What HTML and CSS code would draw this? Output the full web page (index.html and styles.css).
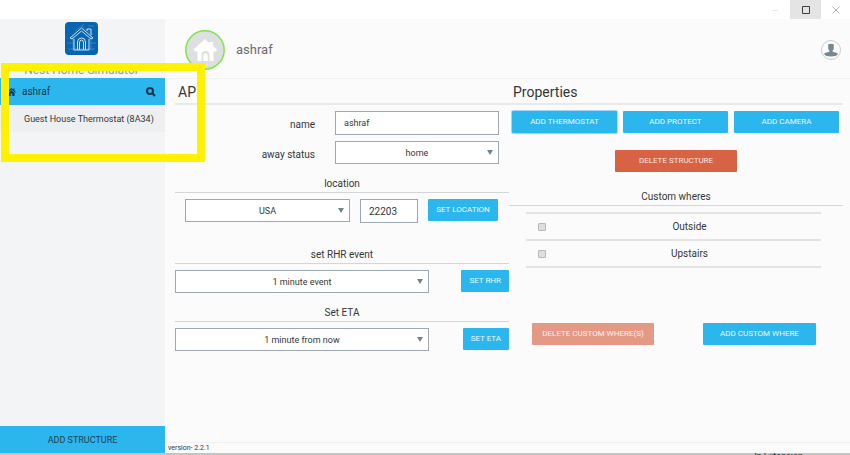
FILE: index.html
```
<!DOCTYPE html>
<html lang="en">
<head>
<meta charset="utf-8">
<title>Nest Home Simulator</title>
<link rel="stylesheet" href="styles.css">
</head>
<body>
<header class="titlebar">
  <button class="window-btn minimize" aria-label="Minimize"><svg width="8" height="8" viewBox="0 0 8 8"><path d="M1 4.500h6"/></svg></button>
  <button class="window-btn maximize" aria-label="Maximize"><svg width="8" height="8" viewBox="0 0 8 8"><path d="M.5.5h7v7h-7z"/></svg></button>
  <button class="window-btn close" aria-label="Close"><svg width="8" height="8" viewBox="0 0 8 8"><path d="M.5.5l7 7M7.500.5l-7 7"/></svg></button>
</header>
<div class="app">
  <aside class="sidebar">
    <div class="brand">
      <svg class="logo" width="33" height="33" viewBox="0 0 33 33">
        <rect width="33" height="33" rx="4" fill="#0764ae"/>
        <g fill="none" stroke="#7eb4e0" stroke-width=".6" opacity=".6"><path d="M2 21h6M25 21h6M3 27h27M10 9l9-7M17 4l11 9M23 4h6M8 13v16M26 13v16"/></g>
        <g fill="none" stroke="#c8e3f6" stroke-width="1"><path d="M5 16L16.500 6 28 16l-2 1-9.500-8L7 17zM9 17v11h15V17M22 9V7h4v6"/><path d="M12.500 28v-8q0-4 4-4t4 4v8M14.500 28v-7q0-3 2-3t2 3v7"/></g>
      </svg>
      <div class="brand-name">Nest Home Simulator</div>
    </div>
    <nav>
      <a class="structure" href="#">
        <svg width="9" height="8" viewBox="0 0 18 16"><path fill="#14394b" d="M9 0L0 8l1.500 1.500L9 3l7.500 6.500L18 8l-3-2.700V1h-2.500v2zM9 4.500L3 10v6h4.500v-5h3v5H15v-6z"/></svg>
        <span>ashraf</span>
        <svg class="search" width="10" height="10" viewBox="0 0 10 10"><circle cx="4" cy="4" r="3"/><path d="M6.300 6.300L9 9"/></svg>
      </a>
      <a class="device" href="#">Guest House Thermostat (8A34)</a>
    </nav>
    <button class="add-structure">ADD STRUCTURE</button>
  </aside>
  <main>
    <div class="profile">
      <svg class="avatar" width="40" height="40" viewBox="0 0 40 40">
        <circle cx="20" cy="20" r="19.200" fill="#dedfe1" stroke="#7ce843" stroke-width="1.500"/>
        <path fill="#fff" d="M20 9L8.500 19.500l1.500 2h2.500V31h4v-6q0-4 4-4t4 4v6h4v-9.500H31l1-2-4-3.700V12h-4v1zM18.300 31v-5.500q0-2.500 2.200-2.500t2.200 2.500V31z"/>
      </svg>
      <h1>ashraf</h1>
      <button class="account" aria-label="Account">
        <svg width="20" height="20" viewBox="0 0 20 20"><circle cx="10" cy="10" r="9.500" fill="#fcfcfc" stroke="#c9cccf"/><path fill="#758791" d="M7.200 4.500Q10 3 12.800 4.500V8q0 1.500-1.200 2.500v1.300q4.500.7 5.400 2.200-1.300 2.500-7 2.500T3 14q.9-1.500 5.400-2.200v-1.300Q7.200 9.500 7.200 8z"/></svg>
      </button>
    </div>
    <div class="columns">
      <section class="api">
        <h2>API</h2>
        <div class="fields">
          <label for="name">name</label>
          <input class="control" id="name" type="text" value="ashraf">
          <label for="away">away status</label>
          <div class="select"><select class="control" id="away"><option>home</option></select></div>
        </div>
        <h3>location</h3>
        <div class="location">
          <div class="select"><select class="control" aria-label="Country"><option>USA</option></select></div>
          <input class="control zip" type="text" aria-label="Postal code" value="22203">
          <button class="btn">SET LOCATION</button>
        </div>
        <h3>set RHR event</h3>
        <div class="event">
          <div class="select"><select class="control" aria-label="RHR event"><option>1 minute event</option></select></div>
          <button class="btn">SET RHR</button>
        </div>
        <h3>Set ETA</h3>
        <div class="event">
          <div class="select"><select class="control" aria-label="ETA"><option>1 minute from now</option></select></div>
          <button class="btn">SET ETA</button>
        </div>
      </section>
      <section class="properties">
        <h2>Properties</h2>
        <div class="add-row">
          <button class="btn focused">ADD THERMOSTAT</button>
          <button class="btn">ADD PROTECT</button>
          <button class="btn">ADD CAMERA</button>
        </div>
        <div class="delete-row"><button class="btn danger">DELETE STRUCTURE</button></div>
        <h3>Custom wheres</h3>
        <table class="wheres">
          <tr><td class="check"><input type="checkbox" id="outside"></td><td><label for="outside">Outside</label></td></tr>
          <tr><td class="check"><input type="checkbox" id="upstairs"></td><td><label for="upstairs">Upstairs</label></td></tr>
        </table>
        <div class="where-actions">
          <button class="btn danger" disabled>DELETE CUSTOM WHERE(S)</button>
          <button class="btn">ADD CUSTOM WHERE</button>
        </div>
      </section>
    </div>
    <footer>version- 2.2.1</footer>
  </main>
  <div class="highlight"></div>
</div>
<div class="taskbar"><span>In Extension</span></div>
</body>
</html>
```
FILE: styles.css
```
* { box-sizing: border-box; }

body {
  margin: 0;
  height: 100vh;
  overflow: hidden;
  display: flex;
  flex-direction: column;
  font: 10px/12px Roboto, sans-serif;
  color: #333739;
  background: #fff;
}

button, input, select { font: inherit; color: inherit; margin: 0; }
button { border: 0; padding: 0; }
svg { display: block; flex: none; }
a { color: inherit; text-decoration: none; }

.titlebar { display: flex; justify-content: flex-end; height: 19px; flex: none; }
.window-btn {
  width: 31px;
  display: flex;
  align-items: center;
  justify-content: center;
  background: none;
}
.window-btn path { fill: none; stroke: #b5b5b5; }
.minimize path { stroke: #e8e8e8; }
.maximize { background: #e4e4e4; }
.maximize path { stroke: #3c3c3c; }
.close { width: 29px; }

.app { position: relative; flex: 1; min-height: 0; display: flex; }

.sidebar {
  width: 165px;
  flex: none;
  display: flex;
  flex-direction: column;
  background: #f2f4f6;
}
.brand {
  height: 59px;
  padding: 3px 2px 0 0;
  display: flex;
  flex-direction: column;
  align-items: center;
  gap: 8px;
}
.brand-name { font-size: 12px; line-height: 14px; color: #969ba0; white-space: nowrap; }
.structure {
  display: flex;
  align-items: center;
  gap: 6px;
  height: 27px;
  padding: 0 9px 0 7px;
  background: #2bb7ed;
  color: #14394b;
}
.search { margin-left: auto; fill: none; stroke: #14394b; stroke-width: 2; }
.device {
  display: block;
  padding: 8px 9px 7px 24px;
  background: #eeeff1;
  font-size: 9px;
  white-space: nowrap;
}
.add-structure {
  margin-top: auto;
  height: 27px;
  background: #2bb7ed;
  color: #1d4152;
  font-size: 9px;
}

main { flex: 1; min-width: 0; display: flex; flex-direction: column; background: #fbfbfb; }
.profile {
  display: flex;
  align-items: center;
  gap: 11px;
  height: 60px;
  padding: 2px 9px 0 20px;
  border-bottom: 1px solid #f1f1f1;
}
h1 { margin: 0; font-size: 13px; line-height: 16px; font-weight: 400; color: #6c6c6c; }
.account { margin-left: auto; background: none; }

.columns { flex: 1; display: grid; grid-template-columns: 1fr 1fr; padding: 0 7px 0 10px; }
h2 {
  margin: 0 0 6px;
  padding: 5px 3px 3px;
  font-size: 14px;
  line-height: 16px;
  font-weight: 400;
  border-bottom: 2px solid #e8e9e9;
}
h3 {
  margin: 0 0 6px;
  padding-bottom: 2px;
  font-size: 10px;
  line-height: 12px;
  font-weight: 400;
  text-align: center;
  border-bottom: 1px solid #d4d6d7;
}

.fields {
  display: grid;
  grid-template-columns: 140px 1fr;
  gap: 6px 20px;
  align-items: center;
  padding-right: 10px;
  margin-bottom: 14px;
}
.fields label { padding-top: 4px; text-align: right; }
.control {
  width: 100%;
  height: 23px;
  border: 1px solid #9da9b2;
  border-radius: 0;
  background: #fff;
  font-size: 9px;
}
input.control { height: 24px; padding: 0 8px; }
input.zip { font-size: 10px; }
select.control { appearance: none; text-align-last: center; padding: 0; }
.select { position: relative; }
.select::after {
  content: "";
  position: absolute;
  right: 6px;
  top: 9px;
  border: solid transparent;
  border-width: 5px 3px 0;
  border-top-color: #708490;
}

.btn {
  height: 22px;
  padding: 0 8px;
  border-radius: 1px;
  background: #2bb7ed;
  color: #e9f8ff;
  font-size: 8px;
  white-space: nowrap;
}
.location {
  display: grid;
  grid-template-columns: 1fr 58px 70px;
  gap: 10px;
  padding: 0 11px 0 10px;
  margin-bottom: 26px;
}
.event {
  display: flex;
  justify-content: space-between;
  margin-bottom: 14px;
}
.event .select { width: 76%; }

.properties h2 { padding-left: 4px; }
.add-row {
  display: grid;
  grid-template-columns: repeat(3, 1fr);
  gap: 6px;
  padding: 0 4px 0 3px;
}
.focused { box-shadow: 0 0 0 1px #a6d4fa; }
.delete-row { display: flex; justify-content: center; margin: 17px 0 19px; }
.danger { width: 122px; background: #d76244; color: #fbe9e4; }
.danger:disabled { background: #e49984; color: #fdf1ee; }

.wheres {
  width: 295px;
  margin: 0 0 0 17px;
  border-collapse: collapse;
  text-align: center;
}
.wheres tr { height: 27px; border: solid #e2e3e3; border-width: 2px 0; }
.wheres td { padding: 0; }
.wheres .check { width: 32px; }
.wheres input {
  appearance: none;
  display: block;
  width: 8px;
  height: 8px;
  margin-left: 12px;
  border: 1px solid #b8b8b8;
  border-radius: 1px;
  background: #dedede;
}
.where-actions { display: flex; justify-content: space-between; padding: 0 27px 0 23px; margin-top: 55px; }
.where-actions .btn:last-child { width: 113px; }

footer {
  height: 11px;
  padding-left: 3px;
  border-top: 1px solid #f1f1f1;
  font-size: 7px;
  line-height: 10px;
}

.highlight {
  position: absolute;
  left: 1px;
  top: 44px;
  width: 204px;
  height: 99px;
  border: 8px solid #fff100;
  pointer-events: none;
}

.taskbar {
  flex: none;
  height: 2px;
  overflow: hidden;
  padding-right: 47px;
  background: #c4c4c4;
  font-size: 9px;
  line-height: 7px;
  text-align: right;
}
```
